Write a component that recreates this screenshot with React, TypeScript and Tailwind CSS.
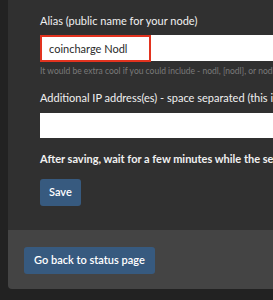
const font = { fontFamily: "Lato, 'Open Sans', sans-serif" };

export default function App() {
  return (
    <div className="h-[300px] w-[273px] overflow-hidden bg-[#222222] pl-2" style={font}>
      <div className="w-[420px] overflow-hidden rounded-b-[4px]">
        <div className="bg-[#303030] pl-[32px] pt-[12px] pb-[24px]">
          <label className="block text-[11px] leading-[17px] text-[#f0f0f0]">Alias (public name for your node)</label>
          <div className="relative mt-[6px]">
            <input
              readOnly
              value="coincharge Nodl"
              className="block h-[26px] w-full bg-white pl-[9px] text-[11px] text-[#2a2a2a] outline-none"
              style={font}
            />
            <div className="pointer-events-none absolute left-0 top-0 h-[27px] w-[111px] border-2 border-[#e2331f]" />
          </div>
          <p className="mt-[4px] text-[8.5px] leading-[13px] text-[#7a7a7a]">
            It would be extra cool if you could include - nodl, [nodl], or nodl in your alias
          </p>
          <label className="mt-[11px] block text-[11px] leading-[17px] text-[#f0f0f0]">
            Additional IP address(es) - space separated (this is optional)
          </label>
          <input readOnly className="mt-[7px] block h-[25px] w-full bg-white outline-none" />
          <p className="mt-[12px] text-[11px] font-bold leading-[17px] text-[#f0f0f0]">
            After saving, wait for a few minutes while the settings are applied
          </p>
          <button className="mt-[12px] h-[27px] rounded-[3px] bg-[#375a7f] px-[9px] text-[11px] font-semibold text-white">
            Save
          </button>
        </div>
        <div className="bg-[#444444] pl-[16px] pt-[16px] pb-[15px]">
          <button className="h-[27px] rounded-[3px] bg-[#375a7f] px-[10px] text-[11px] font-semibold text-white">
            Go back to status page
          </button>
        </div>
      </div>
    </div>
  );
}
